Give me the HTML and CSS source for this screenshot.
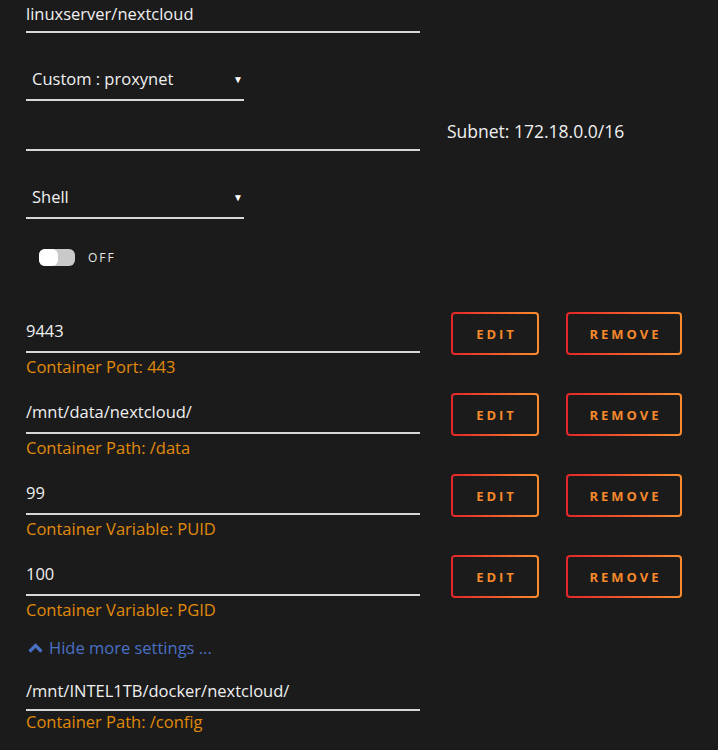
FILE: index.html
```html
<!DOCTYPE html>
<html lang="en">
<head>
  <meta charset="UTF-8" />
  <title>Update Container</title>
  <link rel="stylesheet" href="styles.css">
</head>
<body>
  <form class="settings">
    <div class="line">
      <div class="field wide"><span class="value">linuxserver/nextcloud</span></div>
    </div>

    <div class="line gap-select">
      <div class="field select"><span class="value pad">Custom : proxynet</span><span class="caret">&#9660;</span></div>
    </div>

    <div class="line gap-net">
      <div class="field wide"><span class="value">&nbsp;</span></div>
      <div class="side subnet">Subnet: 172.18.0.0/16</div>
    </div>

    <div class="line gap-select">
      <div class="field select"><span class="value pad">Shell</span><span class="caret">&#9660;</span></div>
    </div>

    <div class="toggle-row">
      <span class="switch"><span class="knob"></span></span>
      <span class="switch-label">OFF</span>
    </div>

    <div class="entry first">
      <div class="field wide"><span class="value">9443</span></div>
      <div class="actions">
        <button type="button" class="btn edit">EDIT</button>
        <button type="button" class="btn remove">REMOVE</button>
      </div>
      <div class="hint">Container Port: 443</div>
    </div>

    <div class="entry">
      <div class="field wide"><span class="value">/mnt/data/nextcloud/</span></div>
      <div class="actions">
        <button type="button" class="btn edit">EDIT</button>
        <button type="button" class="btn remove">REMOVE</button>
      </div>
      <div class="hint">Container Path: /data</div>
    </div>

    <div class="entry">
      <div class="field wide"><span class="value">99</span></div>
      <div class="actions">
        <button type="button" class="btn edit">EDIT</button>
        <button type="button" class="btn remove">REMOVE</button>
      </div>
      <div class="hint">Container Variable: PUID</div>
    </div>

    <div class="entry">
      <div class="field wide"><span class="value">100</span></div>
      <div class="actions">
        <button type="button" class="btn edit">EDIT</button>
        <button type="button" class="btn remove">REMOVE</button>
      </div>
      <div class="hint">Container Variable: PGID</div>
    </div>

    <a class="more-link" href="#">
      <svg width="15" height="10" viewBox="0 0 15 10"><path d="M1.5 8.5 L7.5 2.5 L13.5 8.5" fill="none" stroke="#4a70c4" stroke-width="3.2"/></svg>
      Hide more settings ...
    </a>

    <div class="entry last">
      <div class="field wide"><span class="value">/mnt/INTEL1TB/docker/nextcloud/</span></div>
      <div class="hint">Container Path: /config</div>
    </div>
  </form>
</body>
</html>
```

FILE: styles.css
```css
body {
  margin: 0;
  background: #1b1b1b;
  color: #f0f0f0;
  font-family: "Open Sans", sans-serif;
  font-size: 16.5px;
}

.settings {
  padding: 0 0 0 26px;
  margin-top: -1px;
}

.line {
  display: flex;
  align-items: center;
  gap: 27px;
}

.field {
  display: flex;
  align-items: center;
  height: 24px;
  line-height: 24px;
  padding: 3px 0 5px;
  border-bottom: 2px solid #d8d8d8;
}

.wide {
  width: 394px;
}

.select {
  width: 218px;
  justify-content: space-between;
  padding-bottom: 8px;
}

.value.pad {
  padding-left: 6px;
}

.caret {
  font-size: 10px;
  margin-right: 1px;
  color: #fff;
}

.gap-select {
  margin-top: 31px;
}

.gap-net {
  margin-top: 16px;
}

.subnet {
  font-size: 17.5px;
  margin-bottom: 6px;
}

.toggle-row {
  display: flex;
  align-items: center;
  gap: 13px;
  height: 17px;
  margin: 30px 0 0 13px;
}

.switch {
  display: inline-block;
  width: 36px;
  height: 17px;
  border-radius: 6px;
  background: #c9c9c9;
  position: relative;
}

.knob {
  position: absolute;
  left: 0;
  top: 0;
  width: 19px;
  height: 17px;
  border-radius: 6px;
  background: #fff;
}

.switch-label {
  font-size: 12px;
  line-height: 17px;
  letter-spacing: 2px;
  color: #e6e6e6;
}

.entry {
  display: grid;
  grid-template-columns: 394px auto;
  column-gap: 31px;
  margin-top: 19px;
}

.entry.first {
  margin-top: 50px;
}

.entry .field {
  padding-bottom: 8px;
}

.entry .hint {
  grid-column: 1;
  color: #e08a0b;
  margin-top: 3px;
  line-height: 22px;
}

.actions {
  grid-column: 2;
  grid-row: 1 / span 2;
  display: flex;
  gap: 27px;
  align-self: start;
  margin-top: -4px;
}

.btn {
  height: 43px;
  border: 2px solid transparent;
  border-radius: 4px;
  background:
    linear-gradient(#1b1b1b, #1b1b1b) padding-box,
    linear-gradient(90deg, #e3262a, #fb8c2f) border-box;
  color: #f5892c;
  font-family: "Open Sans", sans-serif;
  font-size: 13px;
  font-weight: 700;
  letter-spacing: 3px;
  padding: 0 0 0 3px;
}

.edit {
  width: 88px;
}

.remove {
  width: 116px;
}

.more-link {
  display: flex;
  align-items: center;
  gap: 6px;
  margin: 16px 0 0 2px;
  color: #4a70c4;
  text-decoration: none;
  line-height: 22px;
}

.entry.last {
  margin-top: 17px;
}

.entry.last .field {
  padding-bottom: 6px;
}

.entry.last .hint {
  margin-top: 0;
}
```
